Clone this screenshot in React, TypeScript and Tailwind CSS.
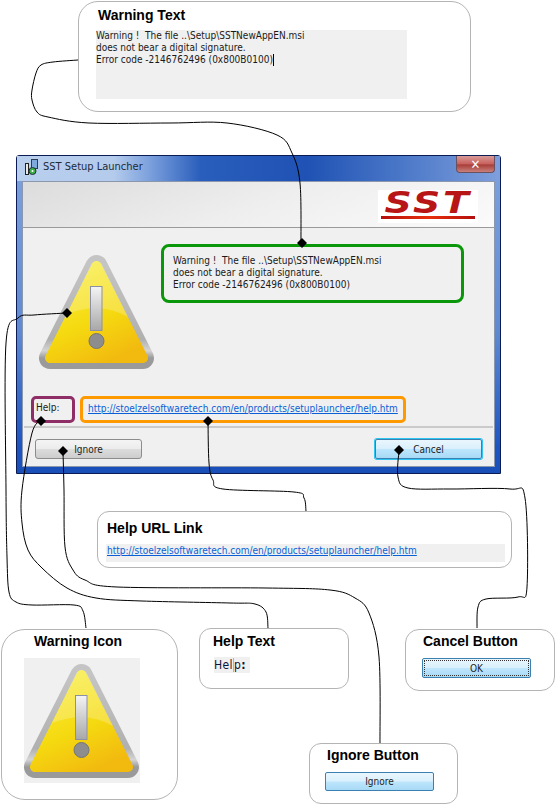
import { useId } from 'react'

type Pt = [number, number]

const connectors: Pt[][] = [
  [[78, 60], [53, 62], [41, 65], [36, 73], [32, 90], [32, 100], [37, 112], [48, 117], [89, 123], [170, 123], [227, 123], [277, 135], [292, 153], [300, 183], [301, 243]],
  [[67, 313], [34, 315], [18, 318], [6, 343], [6, 490], [7, 557], [9, 592], [16, 602], [32, 605], [74, 605], [83, 611], [86, 628]],
  [[41, 420], [32, 433], [22, 490], [22, 523], [28, 550], [42, 568], [67, 588], [96, 598], [142, 601], [230, 603], [255, 604], [266, 612], [268, 628]],
  [[63, 451], [64, 490], [65, 547], [73, 570], [85, 580], [117, 587], [266, 588], [330, 590], [355, 598], [369, 613], [379, 657], [380, 743]],
  [[208, 421], [209, 463], [213, 480], [223, 489], [294, 492], [304, 498], [306, 511]],
  [[399, 450], [398, 477], [408, 488], [450, 489], [510, 489], [525, 498], [527, 587], [518, 597], [486, 599], [478, 607], [477, 628]],
]

const diamonds: Pt[] = [[302, 243], [67, 313], [41, 421], [208, 421], [63, 451], [399, 450]]

// catmull-rom through the points, good enough for hand drawn looking wires
function toPath(pts: Pt[]) {
  let d = `M${pts[0][0]} ${pts[0][1]}`
  for (let i = 0; i < pts.length - 1; i++) {
    const p0 = pts[Math.max(i - 1, 0)]
    const p1 = pts[i]
    const p2 = pts[i + 1]
    const p3 = pts[Math.min(i + 2, pts.length - 1)]
    const c1 = [p1[0] + (p2[0] - p0[0]) / 6, p1[1] + (p2[1] - p0[1]) / 6]
    const c2 = [p2[0] - (p3[0] - p1[0]) / 6, p2[1] - (p3[1] - p1[1]) / 6]
    d += ` C${c1[0]} ${c1[1]} ${c2[0]} ${c2[1]} ${p2[0]} ${p2[1]}`
  }
  return d
}

function WarningIcon() {
  const id = useId()
  return (
    <svg width="115" height="116" viewBox="0 0 115 116" className="block">
      <defs>
        <linearGradient id={`${id}rim`} x1="0" y1="0" x2="0" y2="1">
          <stop offset="0" stopColor="#c4c4c4" />
          <stop offset="0.8" stopColor="#b0b0b0" />
          <stop offset="0.92" stopColor="#d4d4d4" />
          <stop offset="1" stopColor="#9a9a9a" />
        </linearGradient>
        <linearGradient id={`${id}fill`} x1="0.3" y1="0" x2="0.75" y2="1">
          <stop offset="0" stopColor="#f8ec3c" />
          <stop offset="0.55" stopColor="#f5da10" />
          <stop offset="1" stopColor="#f2b90f" />
        </linearGradient>
        <linearGradient id={`${id}bar`} x1="0" y1="0" x2="0" y2="1">
          <stop offset="0" stopColor="#f4f4f4" />
          <stop offset="1" stopColor="#a8a8a8" />
        </linearGradient>
      </defs>
      <polygon points="57.500,12 11,104 104,104" fill="#b8b8b8" stroke={`url(#${id}rim)`} strokeWidth="22" strokeLinejoin="round" />
      <polygon points="57.500,12 11,104 104,104" fill={`url(#${id}fill)`} stroke={`url(#${id}fill)`} strokeWidth="10" strokeLinejoin="round" />
      <path d="M52.500 9.500 Q57.500 4 62.500 9.500 L89 63 Q62 47 28 60 Z" fill="#ffffff" fillOpacity="0.22" />
      <rect x="51.500" y="32.500" width="11.500" height="44" fill={`url(#${id}bar)`} stroke="#8b90a6" />
      <circle cx="57.500" cy="87" r="7.500" fill="#8d8d8d" stroke="#757575" />
    </svg>
  )
}

function SetupIcon() {
  return (
    <svg width="15" height="17" viewBox="0 0 15 17">
      <rect x="7.500" y="0.500" width="6" height="9" fill="#7fa8dc" stroke="#2b3a55" />
      <rect x="1.500" y="4.500" width="3" height="11" fill="#e8e8e8" stroke="#222222" />
      <circle cx="8.500" cy="12" r="3.500" fill="#3fae49" stroke="#22303f" />
      <circle cx="8.500" cy="12" r="1" fill="#ffffff" />
    </svg>
  )
}

function Callout({ className, title, titleClass, children }: { className: string; title: string; titleClass: string; children: React.ReactNode }) {
  return (
    <div className={`absolute bg-white border border-[#b4b4b4] ${className}`}>
      <div className={`absolute text-[14px] leading-[17px] font-bold text-black [font-family:'Liberation_Sans',Arial,sans-serif] ${titleClass}`}>{title}</div>
      {children}
    </div>
  )
}

const warningLines = ['Warning !  The file ..\\Setup\\SSTNewAppEN.msi', 'does not bear a digital signature.', 'Error code -2146762496 (0x800B0100)']
const helpUrl = 'http://stoelzelsoftwaretech.com/en/products/setuplauncher/help.htm'

const grayBtn = 'flex items-center justify-center h-[20px] w-[107px] rounded-[3px] border border-[#8c8c8c] bg-[linear-gradient(#f4f4f4_0%,#ececec_48%,#dcdcdc_52%,#cdcdcd_100%)] text-[10px] text-[#222]'
const blueBtn = 'flex items-center justify-center rounded-[2px] border border-[#3c7fb1] bg-[linear-gradient(#eaf6fd_0%,#d9f0fc_48%,#bee6fd_52%,#a7d9f5_100%)] text-[10px] text-[#222]'

function Dialog() {
  return (
    <div className="absolute left-[16px] top-[155px] w-[485px] h-[319px] flex flex-col border border-[#0b1c55] rounded-t-[3px] bg-[linear-gradient(180deg,#7ea2de_0%,#5f8ad2_55%,#1d55c0_92%,#1a4fb8_100%)]">
      <div className="relative h-[25px] shrink-0 flex items-center gap-[4px] pl-[7px] pb-[2px] bg-[linear-gradient(90deg,#b8cfee_0%,#b4cbec_20%,#7fa3de_27%,#2a5ebc_38%,#1f52b4_60%,#4b78c8_80%,#7f9fdc_100%)] text-[11px] text-[#1c2b3c]">
        <SetupIcon />
        <span>SST Setup Launcher</span>
        <div className="absolute right-[5px] top-0 w-[39px] h-[17px] flex items-center justify-center rounded-b-[4px] border border-t-0 border-[#6b5060] bg-[linear-gradient(#d89a98_0%,#c8605c_50%,#a83e38_55%,#c8807c_100%)] text-[13px] leading-none font-bold text-white">
          ✕
        </div>
      </div>
      <div className="flex-1 flex flex-col mx-[5px] mb-[6px] bg-[#f0f0f0] border border-[#8a97ad]">
        <div className="relative h-[45px] shrink-0 bg-[linear-gradient(160deg,#dcdcdc_0%,#eeeeee_50%,#fbfbfb_100%)] border-b border-[#9a9a9a] box-content">
          <div className="absolute right-[16px] top-[8px] w-[100px] h-[33px] bg-white flex flex-col items-center">
            <span className="text-[30px] leading-[25px] font-bold italic tracking-[2px] scale-x-[1.4] text-[#b81616] [font-family:'DejaVu_Sans',sans-serif]">SST</span>
            <span className="mt-[1px] h-[3px] w-[94px] bg-[linear-gradient(90deg,#b40f0f,#e8300c,#b40f0f)]" />
          </div>
        </div>
        <div className="flex flex-1 items-start pl-[16px] pt-[16px]">
          <div className="mt-[10px] w-[115px]">
            <WarningIcon />
          </div>
          <div className="ml-[7px] w-[303px] h-[59px] border-[3px] border-[#0a970a] rounded-[8px] pl-[9px] pt-[8px] text-[10px] leading-[12px] text-[#1a1a1a] whitespace-pre">
            {warningLines.map((line) => (
              <div key={line}>{line}</div>
            ))}
          </div>
        </div>
        <div className="flex items-start gap-[5px] pl-[8px] mb-[3px]">
          <div className="w-[44px] h-[27px] border-[3px] border-[#8e2d66] rounded-[5px] pl-[2px] pt-[3px] text-[10px] leading-[12px] text-[#1a1a1a]">Help:</div>
          <div className="w-[326px] h-[27px] border-[3px] border-[#ff9900] rounded-[5px] pl-[5px] pt-[4px] text-[10px] leading-[12px] text-[#0a5fd6] underline whitespace-nowrap">{helpUrl}</div>
        </div>
        <div className="h-[2px] mx-[1px] bg-[#cacaca]" />
        <div className="flex justify-between px-[12px] pt-[11px] pb-[7px]">
          <div className={grayBtn}>Ignore</div>
          <div className={`${blueBtn} h-[20px] w-[107px] shadow-[0_0_0_1px_#30c4f2]`}>Cancel</div>
        </div>
      </div>
    </div>
  )
}

export default function App() {
  return (
    <div className="relative w-[556px] h-[805px] overflow-hidden bg-white [font-family:'DejaVu_Sans_Condensed','DejaVu_Sans',sans-serif] [font-stretch:condensed]">
      <Callout className="left-[78px] top-[1px] w-[393px] h-[111px] rounded-[20px]" title="Warning Text" titleClass="left-[19px] top-[5px]">
        <div className="absolute left-[17px] top-[28px] w-[311px] h-[69px] bg-[#f0f0f0] text-[10px] leading-[12px] text-[#1a1a1a] whitespace-pre">
          <div>{warningLines[0]}</div>
          <div>{warningLines[1]}</div>
          <div>
            {warningLines[2]}
            <span className="inline-block w-px h-[12px] bg-black align-top" />
          </div>
        </div>
      </Callout>

      <Dialog />

      <Callout className="left-[97px] top-[511px] w-[415px] h-[57px] rounded-[12px]" title="Help URL Link" titleClass="left-[9px] top-[8px]">
        <div className="absolute left-[8px] top-[32px] w-[399px] h-[18px] bg-[#f0f0f0] pl-[1px] pt-[1px] text-[10px] leading-[12px] text-[#0a5fd6] underline whitespace-nowrap">{helpUrl}</div>
      </Callout>

      <Callout className="left-[1px] top-[629px] w-[177px] h-[171px] rounded-[24px]" title="Warning Icon" titleClass="left-[32px] top-[3px]">
        <div className="absolute left-[22px] top-[28px] w-[116px] h-[125px] bg-[#f0f0f0] pt-[5px]">
          <WarningIcon />
        </div>
      </Callout>

      <Callout className="left-[199px] top-[628px] w-[150px] h-[61px] rounded-[12px]" title="Help Text" titleClass="left-[13px] top-[4px]">
        <div className="absolute left-[14px] top-[28px] w-[36px] h-[16px] bg-[#f0f0f0] text-[12px] leading-[16px] text-[#111133] tracking-[0.4px]">
          Hel<span className="border-l border-[#e0b050]">p</span>
          <span className="font-bold">:</span>
        </div>
      </Callout>

      <Callout className="left-[405px] top-[629px] w-[150px] h-[62px] rounded-[14px]" title="Cancel Button" titleClass="left-[17px] top-[3px]">
        <div className={`absolute left-[16px] top-[28px] w-[109px] h-[20px] ${blueBtn}`}>
          <span className="absolute inset-[1px] border border-dotted border-[#333]" />
          OK
        </div>
      </Callout>

      <Callout className="left-[309px] top-[743px] w-[149px] h-[61px] rounded-[12px]" title="Ignore Button" titleClass="left-[17px] top-[3px]">
        <div className={`absolute left-[15px] top-[28px] w-[109px] h-[19px] ${blueBtn}`}>Ignore</div>
      </Callout>

      <svg className="absolute inset-0 pointer-events-none" width="556" height="805" viewBox="0 0 556 805">
        {connectors.map((pts) => (
          <path key={`${pts[0][0]}-${pts[0][1]}`} d={toPath(pts)} fill="none" stroke="#000000" strokeWidth="1" />
        ))}
        {diamonds.map(([x, y]) => (
          <polygon key={`${x}-${y}`} points={`${x},${y - 5} ${x + 5},${y} ${x},${y + 5} ${x - 5},${y}`} fill="#000000" />
        ))}
      </svg>
    </div>
  )
}
